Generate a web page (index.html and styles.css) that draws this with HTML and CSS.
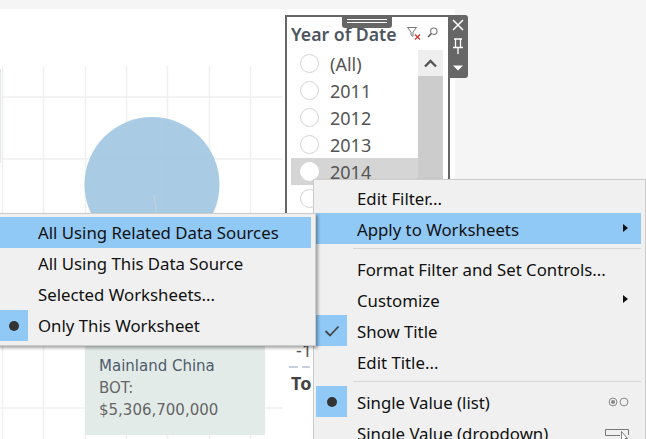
FILE: index.html
```html
<!DOCTYPE html>
<html lang="en">
<head>
  <meta charset="UTF-8" />
  <title>Year of Date filter</title>
  <link rel="stylesheet" href="styles.css">
</head>
<body>
  <div class="sheet">
    <svg class="chart" width="455" height="430" viewBox="0 0 455 430">
      <rect x="0" y="60" width="1" height="94" fill="#e3ebe9" />
      <g stroke="#f0f0f0" stroke-width="1.5" fill="none">
        <path d="M2.5 57V430M43.500 57V430M85.500 57V430M126.500 57V430M167.500 57V430M209.500 57V430M250.500 57V430" />
        <path d="M0 88H283M0 150H283M0 399H283" />
      </g>
      <circle cx="152" cy="175.500" r="67.500" fill="#a2c8e2" fill-opacity="0.92" />
      <path d="M154 186L156.500 204" stroke="#c9d3d9" stroke-width="1" />
    </svg>

    <div class="tip">
      <p class="tip-name">Mainland China</p>
      <p>BOT:</p>
      <p>$5,306,700,000</p>
    </div>

    <div class="legend-scrap">
      <span class="scrap-num">-1</span>
      <span class="scrap-dash"></span>
      <span class="scrap-head">To</span>
    </div>

    <div class="filter-card">
      <div class="grip"></div>
      <div class="filter-head">
        <span class="filter-title">Year of Date</span>
        <svg class="head-icon" width="14" height="14" viewBox="0 0 14 14">
          <path d="M0.500 1.500H9.500L6 6V10.500L4 9V6Z" fill="none" stroke="#777" stroke-width="1" />
          <path d="M8 8.500L13 13.500M13 8.500L8 13.500" stroke="#d9342b" stroke-width="1.300" />
        </svg>
        <svg class="head-icon" width="11" height="11" viewBox="0 0 11 11">
          <circle cx="6.800" cy="4.200" r="3.200" fill="none" stroke="#777" stroke-width="1.100" />
          <path d="M4.500 6.500L1 10" stroke="#555" stroke-width="1.500" />
        </svg>
      </div>
      <div class="filter-body">
        <ul class="year-list">
          <li class="year"><span class="radio"></span>(All)</li>
          <li class="year"><span class="radio"></span>2011</li>
          <li class="year"><span class="radio"></span>2012</li>
          <li class="year"><span class="radio"></span>2013</li>
          <li class="year year-on"><span class="radio"></span>2014</li>
          <li class="year"><span class="radio"></span></li>
        </ul>
        <div class="scrollbar">
          <div class="scroll-up">
            <svg width="13" height="9" viewBox="0 0 13 9">
              <path d="M1 7.500L6.500 2L12 7.500" fill="none" stroke="#555" stroke-width="2.400" />
            </svg>
          </div>
        </div>
      </div>
    </div>

    <div class="card-tools">
      <svg width="14" height="14" viewBox="0 0 14 14">
        <path d="M2 2L12 12M12 2L2 12" stroke="#fff" stroke-width="1.500" />
      </svg>
      <svg width="12" height="16" viewBox="0 0 12 16">
        <path d="M2 1H10M3.500 1V9M8.500 1V9M1 9.500H11M6 10V16" fill="none" stroke="#fff" stroke-width="1.300" />
      </svg>
      <svg class="tool-caret" width="10" height="6" viewBox="0 0 10 6">
        <path d="M0 0.500H10L5 5.500Z" fill="#fff" />
      </svg>
    </div>
  </div>

  <div class="menu menu-main">
    <div class="item"><span class="gutter"></span>Edit Filter...</div>
    <div class="item item-hot"><span class="gutter"></span>Apply to Worksheets<span class="arrow"></span></div>
    <div class="sep"></div>
    <div class="item"><span class="gutter"></span>Format Filter and Set Controls...</div>
    <div class="item"><span class="gutter"></span>Customize<span class="arrow"></span></div>
    <div class="item">
      <span class="gutter gutter-on">
        <svg width="16" height="12" viewBox="0 0 16 12">
          <path d="M1.500 6L6 10.500L14.500 1.500" fill="none" stroke="#444" stroke-width="1.800" />
        </svg>
      </span>Show Title
    </div>
    <div class="item"><span class="gutter"></span>Edit Title...</div>
    <div class="sep"></div>
    <div class="item">
      <span class="gutter gutter-on"><span class="dot"></span></span>Single Value (list)
      <svg class="shortcut" width="21" height="10" viewBox="0 0 21 10">
        <circle cx="5" cy="5" r="3.900" fill="none" stroke="#888" />
        <circle cx="5" cy="5" r="2" fill="#888" />
        <circle cx="16" cy="5" r="3.900" fill="none" stroke="#888" />
      </svg>
    </div>
    <div class="item">
      <span class="gutter"></span>Single Value (dropdown)
      <svg class="shortcut" width="24" height="14" viewBox="0 0 24 14">
        <path d="M0.500 1.500H23.500V7M15 7.500H0.500V1.500" fill="none" stroke="#777" />
        <path d="M16.500 3.500V13L18.500 11L20 13.500L21.500 12.500L20 10.500H22.500Z" fill="#fff" stroke="#666" stroke-width="0.800" />
      </svg>
    </div>
  </div>

  <div class="menu menu-sub">
    <div class="item item-hot">All Using Related Data Sources</div>
    <div class="item">All Using This Data Source</div>
    <div class="item">Selected Worksheets...</div>
    <div class="item">
      <span class="gutter gutter-on"><span class="dot"></span></span>Only This Worksheet
    </div>
  </div>
</body>
</html>
```

FILE: styles.css
```css
html, body {
  margin: 0;
  height: 439px;
  overflow: hidden;
}
body {
  position: relative;
  width: 646px;
  background: #f5f5f5;
  font-family: "Noto Sans", sans-serif;
}
p, ul {
  margin: 0;
  padding: 0;
}
.sheet {
  position: absolute;
  top: 9px;
  left: 0;
  width: 455px;
  height: 430px;
  background: #fff;
}
.chart {
  position: absolute;
  top: 0;
  left: 0;
}

.tip {
  position: absolute;
  left: 85px;
  top: 330px;
  width: 166px;
  height: 96px;
  padding-left: 14px;
  background: #e3ebe9;
  color: #666;
  font-family: "DejaVu Sans", sans-serif;
  font-size: 15px;
  line-height: 22px;
}
.tip-name {
  padding-top: 16px;
  color: #4f5b6b;
}

.legend-scrap {
  position: absolute;
  left: 289px;
  top: 329px;
  display: flex;
  flex-direction: column;
  color: #555;
  font-size: 18px;
}
.scrap-num {
  margin-left: 7px;
  line-height: 24px;
}
.scrap-dash {
  width: 21px;
  height: 2px;
  margin-top: 4px;
  background: repeating-linear-gradient(90deg, #c5d0e0 0 9px, transparent 9px 13px);
}
.scrap-head {
  margin: 3px 0 0 2px;
  font-weight: 700;
  line-height: 24px;
  color: #444;
}

.filter-card {
  position: absolute;
  left: 285px;
  top: 6px;
  width: 161px;
  height: 250px;
  border: 2px solid #666;
  background: #fff;
}
.grip {
  position: absolute;
  left: 55px;
  top: -1px;
  width: 40px;
  height: 4px;
  padding: 3px 5px 5px;
  background: #666;
  border-radius: 0 0 3px 3px;
}
.grip::before {
  content: "";
  display: block;
  height: 2px;
  border-top: 1px solid #fff;
  border-bottom: 1px solid #fff;
}
.filter-head {
  display: flex;
  align-items: center;
  height: 33px;
  padding-left: 4px;
}
.filter-title {
  margin-right: 10px;
  font-size: 17.700px;
  font-weight: 600;
  color: #4e5560;
}
.head-icon {
  margin: -2px 6px 0 0;
}
.filter-body {
  display: flex;
  padding-left: 4px;
}
.year-list {
  width: 127px;
  list-style: none;
}
.year {
  display: flex;
  align-items: center;
  gap: 11px;
  height: 27px;
  padding-left: 9px;
  font-size: 18px;
  color: #555;
}
.year-on {
  background: #d5d5d5;
}
.radio {
  box-sizing: border-box;
  width: 19px;
  height: 19px;
  border: 1px solid #d4d4d4;
  border-radius: 50%;
  background: #fff;
}
.year-on .radio {
  border-color: #fff;
}
.scrollbar {
  width: 25px;
  height: 210px;
  background: #ccc;
}
.scroll-up {
  display: flex;
  align-items: center;
  justify-content: center;
  height: 26px;
  background: #eee;
}

.card-tools {
  position: absolute;
  left: 448px;
  top: 6px;
  display: flex;
  flex-direction: column;
  align-items: center;
  gap: 6px;
  width: 20px;
  height: 63px;
  padding-top: 3px;
  box-sizing: border-box;
  background: #666;
  border-radius: 0 3px 3px 0;
}
.tool-caret {
  margin-top: 5px;
}

.menu {
  position: absolute;
  box-sizing: border-box;
  border: 1px solid #ccc;
  background: #f0f0f0;
  color: #111;
  font-size: 16.800px;
  box-shadow: 2px 2px 3px rgba(0, 0, 0, 0.35);
}
.menu-main {
  left: 313px;
  top: 179px;
  width: 333px;
  height: 280px;
  padding: 2px 4px 0 2px;
}
.menu-sub {
  left: -4px;
  top: 213px;
  width: 320px;
  height: 133px;
  padding: 3px 4px 0 3px;
}
.item {
  display: flex;
  align-items: center;
  position: relative;
  box-sizing: border-box;
  height: 31px;
  white-space: nowrap;
}
.menu-main .item {
  padding-top: 2px;
}
.menu-sub .item {
  padding-left: 38px;
}
.item-hot {
  background: #90c8f6;
}
.gutter {
  display: flex;
  align-items: center;
  justify-content: center;
  flex: none;
  align-self: flex-start;
  width: 31px;
  height: 31px;
  margin: -2px 10px 0 0;
}
.menu-sub .gutter {
  position: absolute;
  left: 0;
  top: 0;
  width: 28px;
  margin: 0;
}
.gutter-on {
  background: #90c8f6;
}
.dot {
  width: 10px;
  height: 10px;
  border-radius: 50%;
  background: #333;
}
.arrow {
  position: absolute;
  right: 13px;
  top: 11px;
  border-left: 5px solid #111;
  border-top: 4px solid transparent;
  border-bottom: 4px solid transparent;
}
.sep {
  height: 1px;
  margin: 4px 0 4px 37px;
  background: #d6d6d6;
}
.shortcut {
  position: absolute;
  right: 12px;
  top: 11px;
}
```
